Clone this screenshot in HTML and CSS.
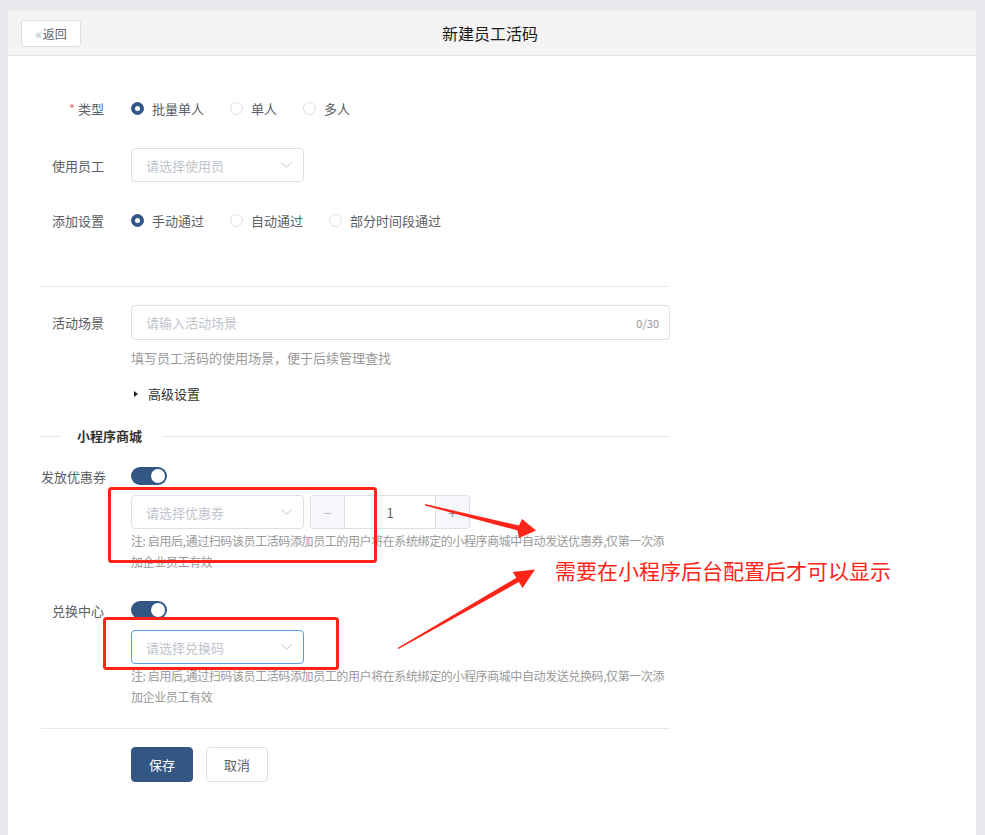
FILE: index.html
```html
<!DOCTYPE html>
<html lang="zh-CN">
<head>
  <meta charset="UTF-8">
  <title>新建员工活码</title>
  <link rel="stylesheet" href="styles.css">
</head>
<body>
  <div class="page">
    <div class="card">
      <div class="card-header">
        <div><button class="back-btn"><span class="back-mark">«</span>返回</button></div>
        <div class="card-title">新建员工活码</div>
        <div></div>
      </div>

      <div class="form">
        <div class="form-item row-type">
          <div class="form-label"><span class="required">*</span>类型</div>
          <div class="radio-group">
            <label class="radio"><span class="radio-dot checked"></span>批量单人</label>
            <label class="radio"><span class="radio-dot"></span>单人</label>
            <label class="radio"><span class="radio-dot"></span>多人</label>
          </div>
        </div>

        <div class="form-item row-employee">
          <div class="form-label">使用员工</div>
          <div class="select">
            <span>请选择使用员</span>
            <svg class="chevron" width="11" height="6" viewBox="0 0 11 6"><path d="M0.5 0.5 L5.5 5.2 L10.5 0.5" fill="none" stroke="#c0c4cc" stroke-width="1"/></svg>
          </div>
        </div>

        <div class="form-item row-add">
          <div class="form-label">添加设置</div>
          <div class="radio-group">
            <label class="radio"><span class="radio-dot checked"></span>手动通过</label>
            <label class="radio"><span class="radio-dot"></span>自动通过</label>
            <label class="radio"><span class="radio-dot"></span>部分时间段通过</label>
          </div>
        </div>

        <div class="divider row-divider1"></div>

        <div class="form-item row-scene">
          <div class="form-label">活动场景</div>
          <div class="input wide">
            <span>请输入活动场景</span>
            <span class="counter">0/30</span>
          </div>
        </div>
        <div class="help">填写员工活码的使用场景，便于后续管理查找</div>
        <div class="advanced"><span class="caret"></span>高级设置</div>

        <div class="section-title">小程序商城</div>

        <div class="form-item row-toggle1">
          <div class="form-label">发放优惠券</div>
          <div class="switch"><span class="knob"></span></div>
        </div>
        <div class="indent controls row-coupon">
          <div class="select">
            <span>请选择优惠券</span>
            <svg class="chevron" width="11" height="6" viewBox="0 0 11 6"><path d="M0.5 0.5 L5.5 5.2 L10.5 0.5" fill="none" stroke="#c0c4cc" stroke-width="1"/></svg>
          </div>
          <div class="stepper">
            <span class="step minus">−</span>
            <span class="step-value">1</span>
            <span class="step plus">+</span>
          </div>
        </div>
        <div class="indent note">注: 启用后,通过扫码该员工活码添加员工的用户将在系统绑定的小程序商城中自动发送优惠券,仅第一次添加企业员工有效</div>

        <div class="form-item row-toggle2">
          <div class="form-label">兑换中心</div>
          <div class="switch"><span class="knob"></span></div>
        </div>
        <div class="indent row-exchange">
          <div class="select focused">
            <span>请选择兑换码</span>
            <svg class="chevron" width="11" height="6" viewBox="0 0 11 6"><path d="M0.5 0.5 L5.5 5.2 L10.5 0.5" fill="none" stroke="#c0c4cc" stroke-width="1"/></svg>
          </div>
        </div>
        <div class="indent note">注: 启用后,通过扫码该员工活码添加员工的用户将在系统绑定的小程序商城中自动发送兑换码,仅第一次添加企业员工有效</div>

        <div class="divider row-divider2"></div>

        <div class="indent actions">
          <button class="btn primary">保存</button>
          <button class="btn">取消</button>
        </div>
      </div>
    </div>
  </div>

  <!-- screenshot annotations -->
  <svg class="marks" width="985" height="835" viewBox="0 0 985 835">
    <rect x="109.5" y="488.5" width="266" height="73" rx="2" fill="none" stroke="#ff2418" stroke-width="3"/>
    <rect x="104.5" y="618.5" width="233" height="50" rx="2" fill="none" stroke="#ff2418" stroke-width="3"/>
    <polygon points="425,504 519,525.6 522,519 536,530.5 519,538 517.5,530.4 425,505.6" fill="#ff2418"/>
    <polygon points="397.5,648 516.4,577.7 512.6,572 535,569.5 522.6,588 518.8,582.1 398.5,649" fill="#ff2418"/>
  </svg>
  <div class="note-red">需要在小程序后台配置后才可以显示</div>
</body>
</html>
```

FILE: styles.css
```css
html, body {
  margin: 0;
  padding: 0;
}

body {
  position: relative;
  background-color: #e9eaed;
  font-family: "Noto Sans CJK SC", "Liberation Sans", sans-serif;
  color: #606266;
}

.page {
  height: 835px;
  padding: 11px 9px 0 8px;
  box-sizing: border-box;
}

.card {
  height: 100%;
  background: #fff;
}

.card-header {
  display: grid;
  grid-template-columns: 1fr auto 1fr;
  align-items: center;
  height: 44px;
  background: #f4f4f4;
  border-bottom: 1px solid #e2e3e6;
}

.back-btn {
  display: flex;
  align-items: center;
  justify-content: center;
  margin-left: 13px;
  width: 60px;
  height: 27px;
  padding: 0;
  background: #fff;
  border: 1px solid #dcdfe6;
  border-radius: 3px;
  font-family: inherit;
  font-size: 12px;
  color: #606266;
}

.back-mark {
  color: #a9b6c8;
  font-size: 14px;
  margin-right: 1px;
}

.card-title {
  font-size: 16px;
  color: #1a1a1a;
  margin-right: 4px;
}

.form {
  width: 629px;
  padding: 35px 0 0 33px;
}

.form-item {
  display: flex;
  align-items: center;
}

.form-label {
  flex-shrink: 0;
  width: 90px;
  padding-right: 27px;
  box-sizing: border-box;
  text-align: right;
  font-size: 13px;
  color: #5a5e66;
  white-space: nowrap;
}

.required {
  color: #f56c6c;
  margin-right: 3px;
}

.row-type { height: 35px; }
.row-employee { margin-top: 22px; }
.row-add { height: 35px; margin-top: 21px; }
.row-divider1 { margin-top: 48px; }
.row-scene { margin-top: 18px; }
.row-toggle1 { margin-top: 21px; height: 18px; }
.row-coupon { margin-top: 10px; }
.row-toggle2 { margin-top: 29px; height: 18px; }
.row-exchange { margin-top: 11px; }
.row-divider2 { margin-top: 21px; }

.radio-group {
  display: flex;
  align-items: center;
}

.radio {
  display: flex;
  align-items: center;
  margin-right: 26px;
  font-size: 13px;
  color: #5a5e66;
}

.radio-dot {
  display: flex;
  align-items: center;
  justify-content: center;
  width: 13px;
  height: 13px;
  margin-right: 8px;
  border: 1px solid #dcdfe6;
  border-radius: 50%;
  box-sizing: border-box;
}

.radio-dot.checked {
  background: #335784;
  border-color: #335784;
}

.radio-dot.checked::after {
  content: "";
  width: 5px;
  height: 5px;
  border-radius: 50%;
  background: #fff;
}

.select,
.input {
  display: flex;
  align-items: center;
  justify-content: space-between;
  width: 173px;
  height: 34px;
  padding: 0 10px 0 14px;
  box-sizing: border-box;
  border: 1px solid #dcdfe6;
  border-radius: 4px;
  font-size: 13px;
  color: #c0c4cc;
  background: #fff;
}

.select.focused {
  border-color: #5d9ae0;
}

.input.wide {
  width: 539px;
  height: 35px;
}

.counter {
  font-size: 11px;
  color: #909399;
}

.chevron {
  margin-right: 1px;
}

.divider {
  height: 1px;
  background: #e8e9ec;
}

.help {
  margin: 8px 0 0 90px;
  font-size: 13px;
  line-height: 20px;
  color: #999;
}

.advanced {
  display: flex;
  align-items: center;
  margin: 16px 0 0 93px;
  font-size: 13px;
  line-height: 20px;
  color: #333;
}

.caret {
  width: 0;
  height: 0;
  margin-right: 10px;
  border-left: 4px solid #222;
  border-top: 3.5px solid transparent;
  border-bottom: 3.5px solid transparent;
}

.section-title {
  display: flex;
  align-items: center;
  margin-top: 22px;
  font-size: 13px;
  font-weight: bold;
  line-height: 20px;
  color: #333;
}

.section-title::before,
.section-title::after {
  content: "";
  height: 1px;
  background: #e4e6ea;
}

.section-title::before {
  width: 19px;
  margin-right: 17px;
}

.section-title::after {
  flex: 1;
  margin-left: 20px;
}

.switch {
  display: flex;
  align-items: center;
  justify-content: flex-end;
  width: 36px;
  height: 18px;
  padding: 0 2px;
  box-sizing: border-box;
  border-radius: 9px;
  background: #335784;
}

.knob {
  width: 14px;
  height: 14px;
  border-radius: 50%;
  background: #fff;
}

.indent {
  margin-left: 90px;
}

.controls {
  display: flex;
  align-items: center;
}

.stepper {
  display: flex;
  width: 160px;
  height: 34px;
  margin-left: 6px;
  box-sizing: border-box;
  border: 1px solid #dcdfe6;
  border-radius: 4px;
  overflow: hidden;
}

.step {
  display: flex;
  align-items: center;
  justify-content: center;
  width: 33px;
  background: #f5f7fa;
  font-size: 15px;
  color: #c0c4cc;
}

.minus { border-right: 1px solid #dcdfe6; }
.plus { border-left: 1px solid #dcdfe6; color: #909399; }

.step-value {
  flex: 1;
  display: flex;
  align-items: center;
  justify-content: center;
  font-size: 13px;
  color: #606266;
}

.note {
  width: 539px;
  margin-top: 1px;
  font-size: 12px;
  line-height: 21px;
  letter-spacing: -0.4px;
  color: #999;
}

.actions {
  display: flex;
  margin-top: 18px;
}

.btn {
  width: 62px;
  height: 35px;
  margin-right: 13px;
  padding: 0;
  border: 1px solid #dcdfe6;
  border-radius: 4px;
  background: #fff;
  font-family: inherit;
  font-size: 13px;
  color: #606266;
}

.btn.primary {
  background: #335784;
  border-color: #335784;
  color: #fff;
}

.marks {
  position: absolute;
  top: 0;
  left: 0;
  pointer-events: none;
}

.note-red {
  position: absolute;
  left: 555px;
  top: 557px;
  font-size: 21px;
  line-height: 26px;
  color: #ff2418;
  white-space: nowrap;
}
```
